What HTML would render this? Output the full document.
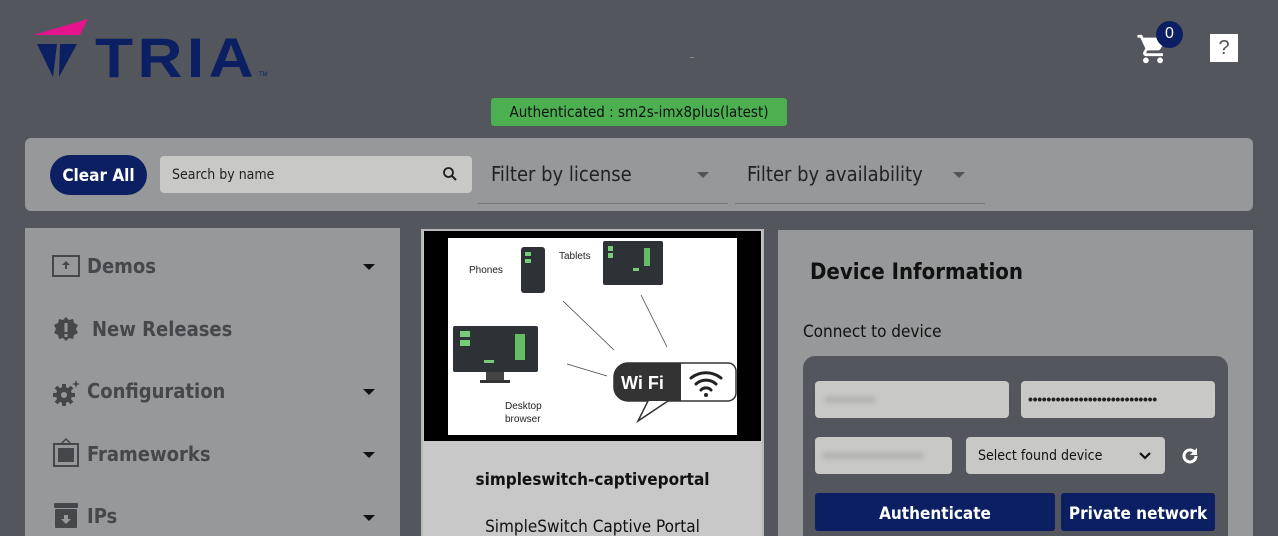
<!DOCTYPE html>
<html><head><meta charset="utf-8"><style>
*{margin:0;padding:0;box-sizing:border-box}
html,body{width:1278px;height:536px;overflow:hidden}
body{background:#53565c;font-family:"Liberation Sans",sans-serif;position:relative}
.a{position:absolute}
.ui{font-family:"DejaVu Sans Condensed","Liberation Sans",sans-serif}
.side{color:#46474b;font-weight:bold;font-size:20px}
.tri{width:0;height:0;border-left:6px solid transparent;border-right:6px solid transparent;border-top:6px solid #111}
</style></head><body>
<svg class="a" style="left:0;top:0" width="300" height="90">
<polygon points="33,35 88,19 80,35" fill="#e5148d"/>
<polygon points="37,44 57,44 53,77" fill="#0b1f62"/>
<polygon points="60,44 77,44 59,77" fill="#0b1f62"/>
<text x="95" y="77" font-family="Liberation Sans" font-weight="bold" font-size="56" fill="#0b1f62" letter-spacing="4" textLength="163" lengthAdjust="spacingAndGlyphs">TRIA</text>
<text x="259" y="76" font-size="6" fill="#0b1f62" font-family="Liberation Sans">TM</text>
</svg>
<svg class="a" style="left:1136px;top:32px" width="34" height="34" viewBox="0 0 24 24"><path fill="#fff" d="M7 18c-1.1 0-2 .9-2 2s.9 2 2 2 2-.9 2-2-.9-2-2-2zM1 2v2h2l3.6 7.59-1.35 2.450c-.16.28-.25.61-.25.96 0 1.1.9 2 2 2h12v-2H7.420c-.14 0-.25-.11-.25-.25l.03-.12.9-1.63h7.45c.75 0 1.41-.41 1.75-1.03l3.58-6.49A1 1 0 0020 4H5.21l-.94-2H1zm16 16c-1.1 0-2 .9-2 2s.9 2 2 2 2-.9 2-2-.9-2-2-2z"/></svg>
<div class="a" style="left:1156px;top:21px;width:27px;height:27px;border-radius:50%;background:#0b1f62;color:#fff;font-size:16px;text-align:center;line-height:26px">0</div>
<div class="a" style="left:1210px;top:34px;width:28px;height:28px;background:#fff;color:#555;font-size:20px;text-align:center;line-height:28px">?</div>
<div class="a" style="left:690px;top:57px;width:4px;height:1px;background:#888"></div>
<div class="a ui" style="left:491px;top:98px;width:296px;height:28px;background:#4caf50;border-radius:3px;color:#111;font-size:15px;text-align:center;line-height:29px">Authenticated : sm2s-imx8plus(latest)</div>
<div class="a" style="left:25px;top:138px;width:1228px;height:73px;background:#97989a;border-radius:6px"></div>
<div class="a ui" style="left:50px;top:155px;width:97px;height:40px;background:#0b1f62;border-radius:20px;color:#fff;font-weight:bold;font-size:17px;text-align:center;line-height:42px">Clear All</div>
<div class="a ui" style="left:160px;top:156px;width:312px;height:37px;background:#c8c8c6;border-radius:4px;font-size:14px;color:#222;line-height:39px;padding-left:12px">Search by name</div>
<svg class="a" style="left:442px;top:166px" width="16" height="16" viewBox="0 0 16 16"><circle cx="6.5" cy="6.5" r="4.5" fill="none" stroke="#222" stroke-width="1.8"/><line x1="10" y1="10" x2="14" y2="14" stroke="#222" stroke-width="2"/></svg>
<div class="a ui" style="left:491px;top:162px;font-size:20px;color:#222">Filter by license</div>
<div class="a tri" style="left:697px;top:172px;border-top-color:#555"></div>
<div class="a" style="left:478px;top:203px;width:250px;height:1px;background:#777"></div>
<div class="a ui" style="left:747px;top:162px;font-size:20px;color:#222">Filter by availability</div>
<div class="a tri" style="left:953px;top:172px;border-top-color:#555"></div>
<div class="a" style="left:735px;top:203px;width:250px;height:1px;background:#777"></div>
<div class="a" style="left:25px;top:228px;width:375px;height:308px;background:#97989a"></div>
<svg class="a" style="left:52px;top:255px" width="28" height="22"><rect x="1" y="1" width="26" height="20" fill="none" stroke="#46474b" stroke-width="2"/><path d="M14 6l-4 4h3v4h2v-4h3z" fill="#46474b"/></svg>
<div class="a ui side" style="left:87px;top:254px">Demos</div>
<svg class="a" style="left:52px;top:316px" width="28" height="28" viewBox="0 0 28 28"><path d="M14 1l3 3 4-1 1 4 4 2-2 4 2 4-4 2-1 4-4-1-3 3-3-3-4 1-1-4-4-2 2-4-2-4 4-2 1-4 4 1z" fill="#46474b"/><rect x="12.5" y="7" width="3" height="9" fill="#97989a"/><rect x="12.5" y="18" width="3" height="3" fill="#97989a"/></svg>
<div class="a ui side" style="left:92px;top:317px">New Releases</div>
<svg class="a" style="left:52px;top:379px" width="30" height="28" viewBox="0 0 30 28"><circle cx="12" cy="16" r="8" fill="#46474b"/><circle cx="12" cy="16" r="3" fill="#97989a"/><path d="M12 5v4M12 23v4M1 16h4M19 16h4M4 8l3 3M17 21l3 3M4 24l3-3M17 11l3-3" stroke="#46474b" stroke-width="4"/><path d="M24 1l1 3 3 1-3 1-1 3-1-3-3-1 3-1z" fill="#46474b"/></svg>
<div class="a ui side" style="left:87px;top:379px">Configuration</div>
<svg class="a" style="left:53px;top:437px" width="26" height="30"><rect x="1" y="7" width="24" height="22" fill="none" stroke="#46474b" stroke-width="2"/><rect x="5" y="11" width="16" height="14" fill="#46474b"/><path d="M8 7l5-5 5 5" fill="none" stroke="#46474b" stroke-width="1.5"/></svg>
<div class="a ui side" style="left:87px;top:442px">Frameworks</div>
<svg class="a" style="left:54px;top:503px" width="24" height="26"><rect x="0" y="0" width="24" height="5" rx="1" fill="#46474b"/><rect x="1" y="6" width="22" height="19" rx="1" fill="#46474b"/><path d="M12 21l-5-5h3v-4h4v4h3z" fill="#97989a"/></svg>
<div class="a ui side" style="left:87px;top:504px">IPs</div>
<div class="a tri" style="left:363px;top:264px"></div>
<div class="a tri" style="left:363px;top:389px"></div>
<div class="a tri" style="left:363px;top:452px"></div>
<div class="a tri" style="left:363px;top:515px"></div>
<div class="a" style="left:421px;top:229px;width:343px;height:307px;background:#c8c8c8;border:2px solid #b8b8b8;border-bottom:none"></div>
<div class="a" style="left:424px;top:231px;width:337px;height:210px;background:#000"></div>
<svg class="a" style="left:448px;top:238px" width="289" height="197" viewBox="0 0 289 197">
<rect width="289" height="197" fill="#fff"/>
<text x="21" y="35" font-size="10" font-family="Liberation Sans" fill="#222">Phones</text>
<text x="111" y="21" font-size="10" font-family="Liberation Sans" fill="#222">Tablets</text>
<text x="57" y="171" font-size="10" font-family="Liberation Sans" fill="#222">Desktop</text>
<text x="57" y="184" font-size="10" font-family="Liberation Sans" fill="#222">browser</text>
<rect x="73" y="9" width="24" height="46" rx="3" fill="#2e3135"/>
<rect x="77" y="14" width="6" height="4" fill="#7c7"/><rect x="77" y="21" width="6" height="4" fill="#7c7"/>
<rect x="155" y="3" width="60" height="44" rx="2" fill="#2e3135"/>
<rect x="160" y="8" width="5" height="5" fill="#7c7"/><rect x="160" y="15" width="5" height="5" fill="#7c7"/><rect x="196" y="10" width="6" height="18" fill="#6b6"/><rect x="185" y="30" width="6" height="3" fill="#7c7"/>
<rect x="5" y="88" width="85" height="46" rx="2" fill="#2e3135"/>
<rect x="12" y="93" width="10" height="6" fill="#7c7"/><rect x="12" y="102" width="10" height="6" fill="#7c7"/><rect x="67" y="96" width="10" height="26" fill="#6b6"/><rect x="36" y="122" width="10" height="3" fill="#7c7"/>
<rect x="38" y="134" width="18" height="8" fill="#444"/><rect x="32" y="142" width="30" height="3" fill="#333"/>
<g stroke="#444" stroke-width="0.8"><line x1="115" y1="63" x2="166" y2="112"/><line x1="193" y1="57" x2="219" y2="109"/><line x1="119" y1="126" x2="159" y2="138"/></g>
<path d="M180 125h100a8 8 0 018 8v22a8 8 0 01-8 8h-60l-30 20 10-20h-20a14 14 0 01-14-14v-10a14 14 0 0114-14z" fill="#fff" stroke="#333" stroke-width="1.5"/>
<path d="M180 125h53v38h-53a14 14 0 01-14-14v-10a14 14 0 0114-14z" fill="#333"/>
<text x="173" y="151" font-size="18" font-weight="bold" font-family="Liberation Sans" fill="#fff">Wi Fi</text>
<g fill="none" stroke="#222" stroke-width="3" stroke-linecap="round"><path d="M243 140a24 24 0 0130 0"/><path d="M248 146a15 15 0 0120 0"/><path d="M253 152a7 7 0 0110 0"/></g><circle cx="258" cy="157" r="2" fill="#222"/>
</svg>
<div class="a ui" style="left:421px;top:470px;width:343px;text-align:center;font-weight:bold;font-size:17px;color:#111">simpleswitch-captiveportal</div>
<div class="a ui" style="left:421px;top:517px;width:343px;text-align:center;font-size:17px;color:#111">SimpleSwitch Captive Portal</div>
<div class="a" style="left:778px;top:230px;width:475px;height:306px;background:#97989a"></div>
<div class="a ui" style="left:810px;top:260px;font-weight:bold;font-size:22px;color:#111">Device Information</div>
<div class="a ui" style="left:803px;top:322px;font-size:17px;color:#111">Connect to device</div>
<div class="a" style="left:803px;top:356px;width:425px;height:180px;background:#53565c;border-radius:12px 12px 0 0"></div>
<div class="a" style="left:815px;top:381px;width:194px;height:37px;background:#c8c8c6;border-radius:4px"></div>
<div class="a" style="left:825px;top:396px;width:50px;height:7px;background:#b4b4b2;filter:blur(2px)"></div>
<div class="a" style="left:1021px;top:381px;width:194px;height:37px;background:#c8c8c6;border-radius:4px;font-size:14px;font-weight:bold;line-height:37px;padding-left:7px;letter-spacing:-0.3px;color:#222;overflow:hidden;white-space:nowrap">&#8226;&#8226;&#8226;&#8226;&#8226;&#8226;&#8226;&#8226;&#8226;&#8226;&#8226;&#8226;&#8226;&#8226;&#8226;&#8226;&#8226;&#8226;&#8226;&#8226;&#8226;&#8226;&#8226;&#8226;&#8226;&#8226;&#8226;&#8226;</div>
<div class="a" style="left:815px;top:437px;width:137px;height:37px;background:#c8c8c6;border-radius:4px"></div>
<div class="a" style="left:823px;top:452px;width:100px;height:7px;background:#b4b4b2;filter:blur(2px)"></div>
<div class="a ui" style="left:966px;top:437px;width:199px;height:37px;background:#c8c8c6;border-radius:4px;font-size:14px;line-height:39px;padding-left:12px;color:#111">Select found device</div>
<svg class="a" style="left:1138px;top:450px" width="14" height="12"><path d="M2 3l5 5 5-5" fill="none" stroke="#111" stroke-width="2.2"/></svg>
<svg class="a" style="left:1180px;top:446px" width="20" height="20" viewBox="0 0 20 20"><path d="M16 10a6 6 0 11-2-4.5" fill="none" stroke="#fff" stroke-width="3"/><path d="M17 2v7h-7z" fill="#fff"/></svg>
<div class="a ui" style="left:815px;top:493px;width:240px;height:38px;background:#0b1f62;border-radius:3px;color:#fff;font-weight:bold;font-size:17px;text-align:center;line-height:42px">Authenticate</div>
<div class="a ui" style="left:1061px;top:493px;width:154px;height:38px;background:#0b1f62;border-radius:3px;color:#fff;font-weight:bold;font-size:17px;text-align:center;line-height:42px">Private network</div>
</body></html>
